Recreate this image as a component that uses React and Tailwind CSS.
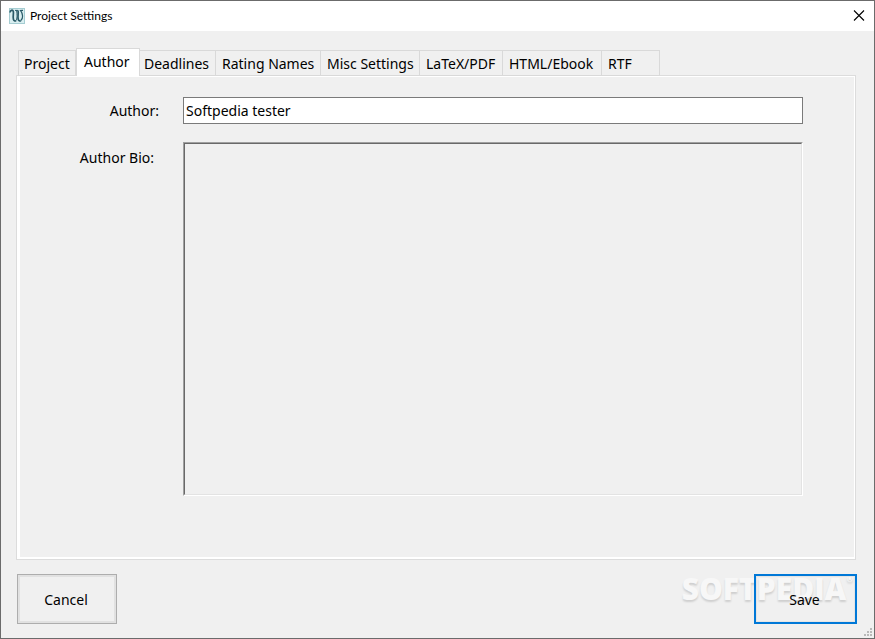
import { useState } from 'react';

const tabs = [
  { name: 'Project', width: 'w-[58px]' },
  { name: 'Author', width: 'w-16' },
  { name: 'Deadlines', width: 'w-[76px]' },
  { name: 'Rating Names', width: 'w-[105px]' },
  { name: 'Misc Settings', width: 'w-[99px]' },
  { name: 'LaTeX/PDF', width: 'w-[83px]' },
  { name: 'HTML/Ebook', width: 'w-[99px]' },
  { name: 'RTF', width: 'w-[58px]' },
];

function AppIcon() {
  return (
    <svg width="16" height="16" viewBox="0 0 16 16" fill="none" aria-hidden="true">
      <rect x="0.5" y="0.5" width="15" height="15" fill="#d9eef0" stroke="#a5cdd2" />
      <path d="M1 4.5C1.2 2.2 3.6 1.4 4.3 3.4C4.9 5.6 3.6 8.6 4.4 11.2C4.8 12.8 6 13.4 7 12.6" stroke="#2b5b68" strokeWidth="1.7" />
      <path d="M7 12.6C8.2 11.2 8.3 7 7.6 2.4M6 2.4H9" stroke="#2b5b68" />
      <path d="M9 2.4C9.8 5 8.4 8.4 9.2 11.2C9.6 12.8 10.8 13.4 11.8 12.6" stroke="#2b5b68" strokeWidth="1.7" />
      <path d="M11.8 12.6C14.4 10.6 14 5.6 11.6 2.6L14 2.4" stroke="#2b5b68" strokeWidth="1.2" />
    </svg>
  );
}

// dotted triangle in the bottom right corner
function ResizeGrip() {
  return (
    <svg className="absolute bottom-0.5 right-0.5" width="8" height="8" fill="#b9b9b9" shapeRendering="crispEdges" aria-hidden="true">
      <rect x="6" y="0" width="2" height="2" />
      <rect x="3" y="3" width="2" height="2" />
      <rect x="6" y="3" width="2" height="2" />
      <rect x="0" y="6" width="2" height="2" />
      <rect x="3" y="6" width="2" height="2" />
      <rect x="6" y="6" width="2" height="2" />
    </svg>
  );
}

export default function App() {
  const [active, setActive] = useState('Author');
  const [author, setAuthor] = useState('Softpedia tester');
  const [bio, setBio] = useState('');

  return (
    <div className="relative flex min-h-screen flex-col border border-[#6b6b6b] bg-[#f0f0f0] font-['Noto_Sans',sans-serif] text-sm leading-5 text-black">
      <header className="flex h-[30px] items-center bg-white pl-2 pr-[9px]">
        <AppIcon />
        <h1 className="ml-[5px] flex-1 font-['Lato',sans-serif] text-xs">Project Settings</h1>
        <button aria-label="Close" className="flex h-full items-center">
          <svg width="12" height="12" viewBox="0 0 12 12" stroke="#000" strokeWidth="1.1" aria-hidden="true">
            <path d="M1 0.5L11 10.5M11 0.5L1 10.5" />
          </svg>
        </button>
      </header>

      {/* watermark sits under the buttons */}
      <div className="pointer-events-none absolute bottom-[33px] right-[21px] flex items-start font-['Open_Sans',sans-serif] font-extrabold text-[#f7f7f7] [text-shadow:0_2px_2px_rgb(0_0_0/0.14)]">
        <span className="text-[30px] leading-8">SOFTPEDIA</span>
        <span className="text-[8px] leading-3">®</span>
      </div>

      <main className="relative flex flex-1 flex-col pb-3.5 pl-[15px] pr-[18px] pt-[17px]">
        <div role="tablist" className="relative z-10 -mb-px flex items-end pl-0.5">
          {tabs.map((tab, i) => (
            <button
              key={tab.name}
              role="tab"
              aria-selected={active === tab.name}
              onClick={() => setActive(tab.name)}
              className={`${tab.width} shrink-0 whitespace-nowrap border-[#d9d9d9] text-left ${
                active === tab.name
                  ? 'h-7 border-x border-t bg-white pb-0.5 pl-[7px]'
                  : `h-[26px] border-y border-r bg-[#f0f0f0] pt-0.5 ${i === 0 ? 'border-l pl-[5px]' : i === 2 ? 'pl-1' : 'pl-1.5'}`
              }`}
            >
              {tab.name}
            </button>
          ))}
        </div>

        <section role="tabpanel" className="flex flex-1 flex-col border border-[#dcdcdc] bg-white pb-0.5 pl-[3px] pr-px pt-px">
          <div className="grid flex-1 grid-cols-[163px_1fr] grid-rows-[27px_1fr] gap-y-[18px] bg-[#f0f0f0] pb-[61px] pr-[51px] pt-5">
            <label htmlFor="author" className="pr-6 pt-1 text-right">Author:</label>
            <input
              id="author"
              value={author}
              onChange={(e) => setAuthor(e.target.value)}
              className="w-full border border-[#7a7a7a] bg-white px-0.5 outline-none"
            />
            <label htmlFor="bio" className="pr-[29px] pt-1.5 text-right">Author Bio:</label>
            <div className="flex border border-b-white border-l-[#a0a0a0] border-r-white border-t-[#a0a0a0]">
              <textarea
                id="bio"
                value={bio}
                onChange={(e) => setBio(e.target.value)}
                className="w-full resize-none border border-b-[#e3e3e3] border-l-[#696969] border-r-[#e3e3e3] border-t-[#696969] bg-[#f0f0f0] px-0.5 outline-none"
              />
            </div>
          </div>
        </section>

        <footer className="-mr-px ml-px mt-3.5 flex justify-between">
          <button className="h-[50px] w-[100px] border border-[#adadad] bg-[#f0f0f0] pr-0.5 pt-0.5 ring-2 ring-inset ring-[#e1e1e1]">Cancel</button>
          <button className="h-[50px] w-[103px] border-2 border-[#0078d7] pr-0.5 pt-0.5 ring-1 ring-inset ring-[#e5e5e5]">Save</button>
        </footer>
      </main>

      <ResizeGrip />
    </div>
  );
}
